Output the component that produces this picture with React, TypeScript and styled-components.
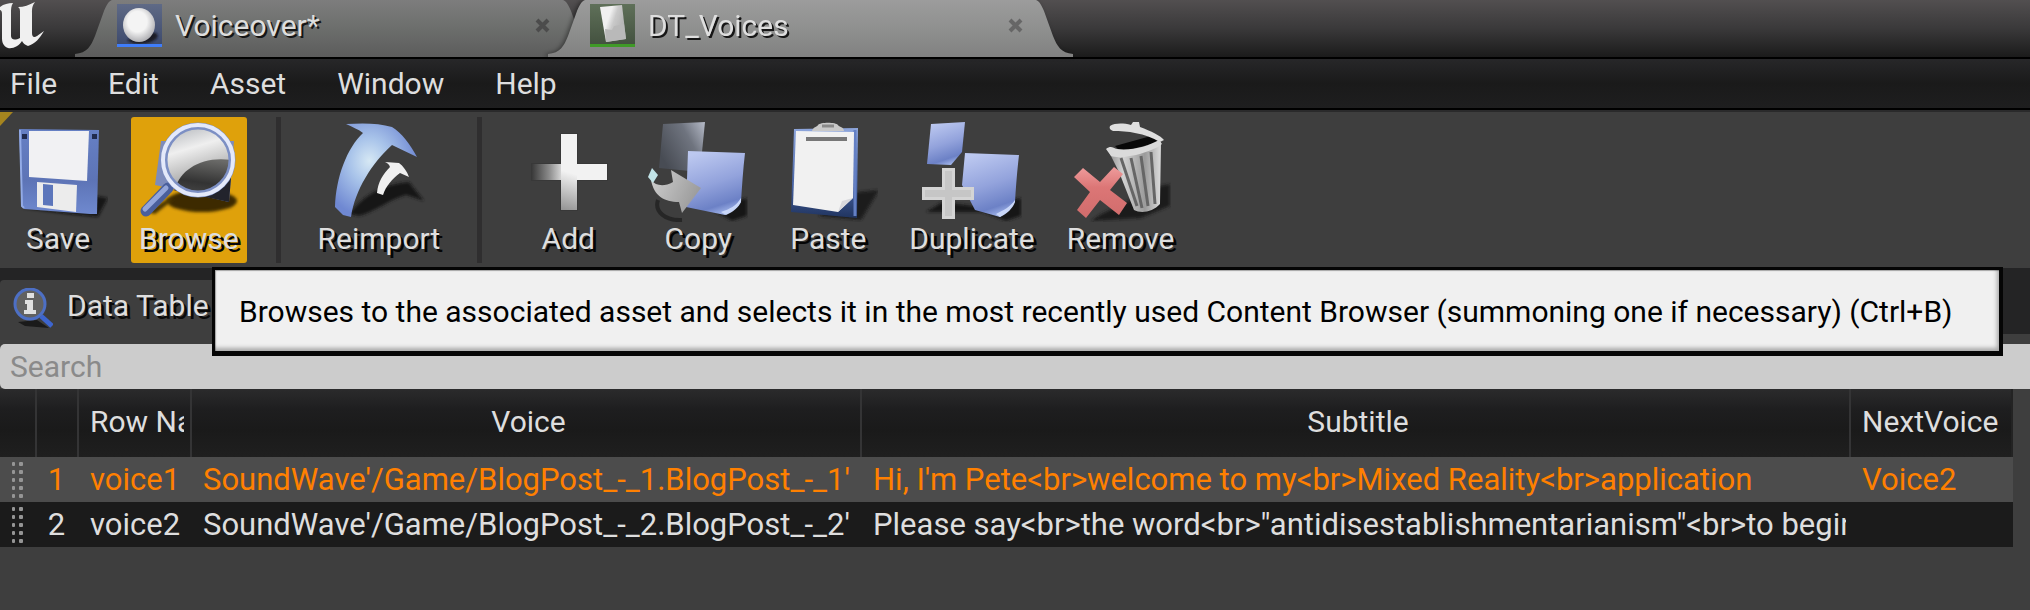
import React from 'react';
import styled, { createGlobalStyle } from 'styled-components';

const GlobalStyle = createGlobalStyle`
  *, *::before, *::after { box-sizing: border-box; }
  html, body, #root { min-height: 100vh; }
  body {
    margin: 0;
    background: #3e3e3e;
    color: #dedede;
    font: 30px/36px Roboto, 'Liberation Sans', sans-serif;
  }
  button, input { font: inherit; color: inherit; border: 0; padding: 0; margin: 0; background: none; }
  button { cursor: pointer; }
`;

const Window = styled.div`
  display: flex;
  flex-direction: column;
  min-height: 100vh;
  overflow: hidden;
`;

/* ---------- title bar and asset tabs ---------- */

const TitleBar = styled.header`
  display: flex;
  height: 59px;
  border-bottom: 2px solid #000;
  background: linear-gradient(#524f50, #3a393a 50%, #1b1b1b);
`;

const LogoBox = styled.div`
  width: 75px;
  flex: none;
  svg { display: block; }
`;

const TabShell = styled.div<{ $active?: boolean }>`
  display: flex;
  width: 525px;
  height: 57px;
  min-width: 0;
  & + & { margin-left: -52px; }
  filter: ${p => (p.$active ? 'drop-shadow(-2px 0 2px rgba(0, 0, 0, 0.4))' : 'none')};
  z-index: ${p => (p.$active ? 1 : 0)};
`;

const TabEnd = styled.svg<{ $flip?: boolean }>`
  flex: none;
  width: 38px;
  height: 57px;
  transform: ${p => (p.$flip ? 'scaleX(-1)' : 'none')};
`;

const TabBody = styled.div<{ $active?: boolean }>`
  flex: 1;
  display: flex;
  align-items: center;
  min-width: 0;
  padding: 0 8px 6px 4px;
  background: ${p =>
    p.$active
      ? 'linear-gradient(#9c9c9c, #8f908f 50%, #818181)'
      : 'linear-gradient(#7d7d7d, #6c6e6c 50%, #5c5c5c)'};
`;

const TabButton = styled.button`
  flex: 1;
  display: flex;
  align-items: center;
  gap: 13px;
  min-width: 0;
  text-align: left;
  text-shadow: 2px 2px 0 #161616;
`;

const CloseButton = styled.button`
  flex: none;
  display: flex;
  padding: 4px;
`;

/* ---------- menu ---------- */

const MenuBar = styled.nav`
  display: flex;
  gap: 51px;
  padding: 7px 10px 6px;
  background: linear-gradient(#272729, #1a1a1a 50%, #1e1e1f);
  border-bottom: 2px solid #000;
`;

const MenuItem = styled.button`
  line-height: 36px;
`;

/* ---------- toolbar ---------- */

const Toolbar = styled.div`
  position: relative;
  display: flex;
  gap: 16px;
  padding: 5px 1px;
  border-top: 2px solid #2a2a2b;
  background: #3e3e3e;
`;

const CornerMark = styled.svg`
  position: absolute;
  left: 0;
  top: 0;
`;

const Tool = styled.button<{ $hot?: boolean }>`
  display: flex;
  flex-direction: column;
  align-items: center;
  min-width: 114px;
  height: 146px;
  padding: 5px 8px 0;
  border-radius: 3px;
  background: ${p => (p.$hot ? '#dfa10b' : 'none')};
  text-shadow: 3px 3px 0 #050505;
  line-height: 34px;
  svg { flex: none; margin: 0 -8px; }
`;

const Separator = styled.span`
  flex: none;
  width: 5px;
  margin: 0 13px;
  background: #2f2e2f;
`;

/* ---------- panel ---------- */

const PanelTabs = styled.div`
  position: relative;
  display: flex;
  padding-top: 12px;
  height: 76px;
  background: linear-gradient(#242425 66px, #3e3e3e 66px);
`;

const PanelTab = styled.button`
  display: flex;
  align-items: flex-start;
  gap: 14px;
  width: 330px;
  padding: 8px 13px 0;
  border-radius: 4px 4px 0 0;
  background: #3e3e3e;
  text-align: left;
  text-shadow: 3px 3px 0 #0a0a0a;
`;

const Tooltip = styled.div`
  position: absolute;
  z-index: 5;
  left: 212px;
  top: -1px;
  border: solid #050505;
  border-width: 3px 4px 5px 3px;
  padding: 24px 46px 21px 24px;
  background: #f0f0f0;
  box-shadow: inset -2px -3px 4px rgba(0, 0, 0, 0.3), inset 1px 1px 1px rgba(0, 0, 0, 0.3);
  color: #000;
  white-space: nowrap;
`;

const SearchInput = styled.input`
  display: block;
  width: 100%;
  height: 45px;
  padding: 0 10px;
  border-radius: 5px 0 0 5px;
  background: #cccccc;
  color: #222;
  outline: none;
  &::placeholder { color: #8a8a8a; opacity: 1; }
`;

const TableWrap = styled.div`
  padding-right: 17px;
`;

const DataTable = styled.table`
  width: 100%;
  table-layout: fixed;
  border-collapse: separate;
  border-spacing: 0;
`;

const Col = styled.col<{ $w?: number }>`
  width: ${p => (p.$w ? `${p.$w}px` : 'auto')};
`;

const HeadCell = styled.th<{ $left?: boolean }>`
  height: 68px;
  padding: 0 6px 2px 11px;
  font-weight: 400;
  text-align: ${p => (p.$left ? 'left' : 'center')};
  background: linear-gradient(#2b2b2c, #1e1e1f 30%, #1a1a1a 60%, #1f1f1f);
  border-right: 2px solid #343435;
  &:last-child { border-right-color: #232323; }
`;

const Row = styled.tr<{ $selected?: boolean }>`
  height: 45px;
  background: ${p => (p.$selected ? '#4c4c4c' : '#1b1b1b')};
  color: ${p => (p.$selected ? '#ff8000' : '#dedede')};
`;

const Cell = styled.td<{ $number?: boolean }>`
  height: 45px;
  padding: ${p => (p.$number ? '0 3px 0 0' : '0 5px 0 11px')};
  text-align: ${p => (p.$number ? 'center' : 'left')};
  font-size: 31px;
`;

const Clip = styled.div`
  overflow: hidden;
  white-space: nowrap;
`;

const GripCell = styled.td`
  padding: 0 0 0 11px;
  svg { display: block; }
`;

/* ---------- drawings ---------- */

const Logo = () => (
  <svg width="46" height="52" viewBox="0 0 46 52" aria-label="Unreal">
    <path
      fill="#f0f0f0"
      d="M0 7C4 4 8 3 13 3C11 6 11 9 11 13V36C11 39 14 41 20 38V13C20 10 20 8 18 7C24 7 29 5 35 2C32 6 32 9 32 13V33C32 37 34 38 37 36L44 31C40 38 35 44 28 46C25 45 23 43 22 41C19 46 13 49 8 48C3 46 2 42 2 38V14C2 11 1 10 0 10Z"
    />
  </svg>
);

const TabEdge = ({ active, flip }: { active?: boolean; flip?: boolean }) => {
  const id = `edge-${active ? 'on' : 'off'}-${flip ? 'r' : 'l'}`;
  const stops = active ? ['#9c9c9c', '#8f908f', '#818181'] : ['#7d7d7d', '#6c6e6c', '#5c5c5c'];
  return (
    <TabEnd viewBox="0 0 38 57" $flip={flip} aria-hidden>
      <linearGradient id={id} x1="0" y1="0" x2="0" y2="57" gradientUnits="userSpaceOnUse">
        <stop offset="0" stopColor={stops[0]} />
        <stop offset="0.5" stopColor={stops[1]} />
        <stop offset="1" stopColor={stops[2]} />
      </linearGradient>
      <path fill={`url(#${id})`} d="M0 57V54C12 53 16 46 20 36L29 11C32 4 34 1 37 0H38V57Z" />
    </TabEnd>
  );
};

const SoundThumb = () => (
  <svg width="45" height="43" viewBox="0 0 45 43" aria-hidden>
    <defs>
      <linearGradient id="st" x1="0" y1="0" x2="0" y2="1">
        <stop offset="0" stopColor="#5f6a86" />
        <stop offset="1" stopColor="#3d4a6d" />
      </linearGradient>
      <radialGradient id="sb" cx="0.45" cy="0.4" r="0.6">
        <stop offset="0.5" stopColor="#f4f4f4" />
        <stop offset="1" stopColor="#b0b0b4" />
      </radialGradient>
      <filter id="sf"><feGaussianBlur stdDeviation="1" /></filter>
    </defs>
    <rect width="45" height="41" fill="url(#st)" />
    <path d="M10 36C16 42 34 41 40 34C42 29 38 28 34 29Z" fill="#1d1f26" filter="url(#sf)" />
    <ellipse cx="22" cy="21" rx="16" ry="17" fill="url(#sb)" />
    <rect y="40" width="45" height="3" fill="#3f7dfa" />
  </svg>
);

const TableThumb = () => (
  <svg width="45" height="43" viewBox="0 0 45 43" aria-hidden>
    <defs>
      <linearGradient id="tt" x1="0" y1="0" x2="0" y2="1">
        <stop offset="0" stopColor="#5f7059" />
        <stop offset="1" stopColor="#43513f" />
      </linearGradient>
      <linearGradient id="tc" x1="0" y1="0" x2="1" y2="0.5">
        <stop offset="0.4" stopColor="#f0f0f0" />
        <stop offset="0.6" stopColor="#c9c9c9" />
        <stop offset="1" stopColor="#b0b0b0" />
      </linearGradient>
    </defs>
    <rect width="45" height="41" fill="url(#tt)" />
    <path d="M10 3L32 1L36 35L16 38Z" fill="url(#tc)" />
    <path d="M16 38L15 25L22 26L24 22L34 20L36 35Z" fill="#b9b9b9" />
    <rect y="40" width="45" height="3" fill="#3f9a27" />
  </svg>
);

const CloseMark = ({ color }: { color: string }) => (
  <svg width="15" height="15" viewBox="0 0 15 15" aria-hidden>
    <path d="M2 2L13 13M13 2L2 13" stroke={color} strokeWidth="4" />
  </svg>
);

const Art = ({ children }: { children: React.ReactNode }) => (
  <svg width="100" height="100" viewBox="0 0 100 100" aria-hidden>{children}</svg>
);

const Blur = ({ id }: { id: string }) => (
  <filter id={id} x="-20%" y="-20%" width="140%" height="140%">
    <feGaussianBlur stdDeviation="1.5" />
  </filter>
);

const BlueCard = ({ id }: { id: string }) => (
  <linearGradient id={id} x1="0.3" y1="0" x2="0.6" y2="1">
    <stop offset="0" stopColor="#bcc8f0" />
    <stop offset="0.5" stopColor="#93a3dc" />
    <stop offset="0.85" stopColor="#6c81c6" />
    <stop offset="1" stopColor="#a3b6ea" />
  </linearGradient>
);

const SaveArt = () => (
  <Art>
    <defs>
      <Blur id="sv-b" />
      <linearGradient id="sv-g" x1="0" y1="0" x2="0" y2="1">
        <stop offset="0" stopColor="#6680c4" />
        <stop offset="0.6" stopColor="#5d74b6" />
        <stop offset="1" stopColor="#6f89cf" />
      </linearGradient>
    </defs>
    <path d="M14 86L88 74L100 76L90 95L60 92Z" fill="#111" opacity="0.8" filter="url(#sv-b)" />
    <path d="M11 7L91 8L89 92L82 92L16 87L14 84Z" fill="url(#sv-g)" />
    <path d="M12 8L14 84L16 86" stroke="#93abe6" strokeWidth="2" fill="none" />
    <path d="M21 9H81L79 59L21 55Z" fill="#f1f1f3" />
    <path d="M29 60L69 63L68 90L29 85Z" fill="#ececec" />
    <path d="M35 62L45 63V84L35 83Z" fill="#5c76bb" />
    <rect x="14" y="12" width="5" height="5" fill="#202b4d" />
    <rect x="84" y="12" width="5" height="5" fill="#202b4d" />
  </Art>
);

const BrowseArt = () => (
  <Art>
    <defs>
      <Blur id="br-b" />
      <linearGradient id="br-g" x1="0.2" y1="0" x2="0.5" y2="1">
        <stop offset="0" stopColor="#b5b8bd" />
        <stop offset="0.35" stopColor="#efefef" />
        <stop offset="1" stopColor="#8a8a8a" />
      </linearGradient>
      <linearGradient id="br-d" x1="0.6" y1="0" x2="0.4" y2="1">
        <stop offset="0" stopColor="#6a6a68" />
        <stop offset="0.6" stopColor="#333" />
        <stop offset="1" stopColor="#4a4a4a" />
      </linearGradient>
      <clipPath id="br-c"><circle cx="59" cy="38" r="32" /></clipPath>
    </defs>
    <ellipse cx="63" cy="79" rx="35" ry="11" fill="#3d2c00" filter="url(#br-b)" />
    <path d="M8 90L30 76L34 78L16 92Z" fill="#4a3500" filter="url(#br-b)" />
    <path d="M22 19L95 19L90 80L16 63Z" fill="#7e8cbb" />
    <path d="M34 68L92 56L90 80Z" fill="#22232c" />
    <path d="M29 66L7 89" stroke="#4a5f9c" strokeWidth="11" strokeLinecap="round" />
    <path d="M27 66L6 87" stroke="#94a6da" strokeWidth="5" strokeLinecap="round" />
    <circle cx="59" cy="38" r="34" fill="url(#br-g)" />
    <path d="M36 66C42 48 62 34 92 38L92 60L70 76Z" fill="url(#br-d)" clipPath="url(#br-c)" />
    <circle cx="59" cy="38" r="34" fill="none" stroke="#7c8fc4" strokeWidth="7" />
    <circle cx="59" cy="38" r="35" fill="none" stroke="#e4e9fa" strokeWidth="4" />
  </Art>
);

const ReimportArt = () => (
  <Art>
    <defs>
      <Blur id="ri-b" />
      <radialGradient id="ri-g" cx="0.42" cy="0.4" r="0.6">
        <stop offset="0" stopColor="#d6e8f4" />
        <stop offset="0.4" stopColor="#a9c4ea" />
        <stop offset="1" stopColor="#6f88d2" />
      </radialGradient>
    </defs>
    <path d="M20 92C34 74 52 62 80 60L95 79L77 73C60 78 46 90 30 94Z" fill="#161616" filter="url(#ri-b)" />
    <path d="M17 2C34 1 50 1 63 5C73 11 81 22 88 35L63 23C43 41 26 68 22 95L14 93L6 85C7 55 18 26 34 11C29 7 23 5 17 2Z" fill="url(#ri-g)" />
    <path d="M56 40L70 41C74 44 78 49 80 55L71 51C63 57 57 64 54 73L48 71C49 60 54 52 61 45C60 42 58 41 56 40Z" fill="#f0f0f0" />
  </Art>
);

const AddArt = () => (
  <Art>
    <defs>
      <linearGradient id="ad-h" x1="14" y1="0" x2="48" y2="0" gradientUnits="userSpaceOnUse">
        <stop offset="0" stopColor="#3a3a3a" />
        <stop offset="0.5" stopColor="#8b8b8b" />
        <stop offset="1" stopColor="#f2f2f2" />
      </linearGradient>
      <linearGradient id="ad-v" x1="44" y1="92" x2="56" y2="52" gradientUnits="userSpaceOnUse">
        <stop offset="0" stopColor="#8a8a8a" />
        <stop offset="1" stopColor="#f2f2f2" />
      </linearGradient>
    </defs>
    <path d="M42 11H60V41H90V59H60V89H42V59H13V41H42Z" fill="#383838" />
    <rect x="14" y="42" width="75" height="16" fill="url(#ad-h)" />
    <rect x="43" y="12" width="16" height="76" fill="url(#ad-v)" />
  </Art>
);

const CopyArt = () => (
  <Art>
    <defs>
      <Blur id="cp-b" />
      <BlueCard id="cp-g" />
      <linearGradient id="cp-d" x1="0" y1="0.6" x2="1" y2="0">
        <stop offset="0" stopColor="#484c54" />
        <stop offset="0.6" stopColor="#6f747f" />
        <stop offset="1" stopColor="#b6bbc8" />
      </linearGradient>
      <linearGradient id="cp-a" x1="0" y1="0" x2="1" y2="0.4">
        <stop offset="0" stopColor="#d0d0d0" />
        <stop offset="1" stopColor="#9c9c9c" />
      </linearGradient>
    </defs>
    <path d="M60 86L99 76V94L84 99Z" fill="#151515" filter="url(#cp-b)" />
    <path d="M10 78C6 90 18 99 34 98" stroke="#262626" strokeWidth="4" fill="none" />
    <path d="M15 2L57 0L52 50L11 46Z" fill="url(#cp-d)" />
    <path d="M40 29L97 31C95 48 94 64 93 80L77 93L38 85Z" fill="url(#cp-g)" />
    <path d="M93 76C88 84 82 87 73 90L78 93C85 90 91 85 93 80Z" fill="#c8d6f8" />
    <path d="M3 58C8 64 16 65 25 60L23 48L53 66L34 91L31 80C16 80 6 74 3 58Z" fill="url(#cp-a)" />
    <path d="M4 46L10 53L5 61L0 55Z" fill="#c2e4e8" />
  </Art>
);

const PasteArt = () => (
  <Art>
    <defs>
      <Blur id="ps-b" />
      <linearGradient id="ps-g" x1="0" y1="0" x2="0" y2="1">
        <stop offset="0" stopColor="#8ea6dc" />
        <stop offset="0.6" stopColor="#4a66a8" />
        <stop offset="1" stopColor="#20345f" />
      </linearGradient>
    </defs>
    <path d="M40 94L80 70L101 68L83 98Z" fill="#1c1c1c" filter="url(#ps-b)" />
    <path d="M16 7L80 6L79 96L13 90Z" fill="url(#ps-g)" />
    <path d="M77 8L77 94" stroke="#6480c4" strokeWidth="3" />
    <path d="M18 9L76 10L75 76L60 90L15 83Z" fill="#f1f1f1" />
    <path d="M75 76L64 79L60 90Z" fill="#d8d8dc" />
    <path d="M34 9C35 5 39 5 40 3C42 0 58 0 60 3C61 5 66 5 66 9Z" fill="#c9c9c9" />
    <path d="M44 4H56" stroke="#8a8a8a" strokeWidth="3" />
    <rect x="28" y="15" width="41" height="4" fill="#777" />
  </Art>
);

const DuplicateArt = () => (
  <Art>
    <defs>
      <Blur id="dp-b" />
      <BlueCard id="dp-g" />
    </defs>
    <path d="M4 90L20 80L52 84L99 76V94L84 99L60 90Z" fill="#191919" filter="url(#dp-b)" />
    <path d="M9 2L43 0C42 10 41 20 40 30L29 43L5 42Z" fill="url(#dp-g)" />
    <path d="M43 31L97 33C95 50 94 64 93 80L78 95L53 88L40 63Z" fill="url(#dp-g)" />
    <path d="M93 78C88 85 82 88 74 92L78 95C85 92 91 86 93 80Z" fill="#c8d6f8" />
    <path d="M20 46H33V65H52V78H33V97H20V78H0V65H20Z" fill="#d4d4d4" />
    <path d="M23 49H30V68H49V75H30V94H23V75H3V68H23Z" fill="#c6c6c6" />
  </Art>
);

const RemoveArt = () => (
  <Art>
    <defs>
      <Blur id="rm-b" />
      <linearGradient id="rm-g" x1="0" y1="0" x2="1" y2="0">
        <stop offset="0" stopColor="#8a8a8a" />
        <stop offset="0.3" stopColor="#d2d2d2" />
        <stop offset="0.7" stopColor="#9b9b9b" />
        <stop offset="1" stopColor="#dcdcdc" />
      </linearGradient>
      <linearGradient id="rm-x" x1="0" y1="0" x2="0" y2="1">
        <stop offset="0" stopColor="#ee9c9c" />
        <stop offset="0.4" stopColor="#dc7676" />
        <stop offset="1" stopColor="#d06c6c" />
      </linearGradient>
    </defs>
    <path d="M30 92L88 64L99 62V84L70 96L20 99Z" fill="#141414" opacity="0.85" filter="url(#rm-b)" />
    <path d="M44 24L80 14L88 20L50 30Z" fill="#080808" />
    <path d="M36 26C44 34 68 32 90 20L89 82C82 90 70 92 63 88L48 50Z" fill="url(#rm-g)" />
    <path d="M50 36L66 84M60 36L71 86M70 34L77 84M80 30L84 82" stroke="#666" strokeWidth="3" fill="none" />
    <path d="M35 27C40 23 42 26 46 27C60 29 78 24 88 18L91 22C80 31 50 38 40 34Z" fill="#dadada" />
    <path d="M39 4C44 1 52 1 60 3L62 0L68 0L69 5C80 9 90 14 93 18L89 20C74 11 56 9 42 9C39 8 38 6 39 4Z" fill="#dedede" />
    <path d="M3 55L12 46L29 60L43 45L52 52L39 68L56 81L48 93L29 78L15 96L6 88L19 70Z" fill="url(#rm-x)" />
  </Art>
);

const InfoArt = () => (
  <svg width="40" height="40" viewBox="0 0 40 40" aria-hidden>
    <path d="M5 34L24 32L36 40L12 38Z" fill="#1a1a1a" />
    <path d="M28 28L39 38" stroke="#3d65cf" strokeWidth="5" />
    <circle cx="17" cy="16" r="15" fill="#616161" stroke="#4d6fc4" strokeWidth="3" />
    <path d="M14 5H21V10H14ZM12 12H20V22H23V26H11V22H14V16H12Z" fill="#e0e0e0" />
  </svg>
);

const Grip = () => (
  <svg width="14" height="39" viewBox="0 0 14 39" aria-hidden>
    {[0, 1, 2, 3, 4].map(i => (
      <g key={i} fill="#959595">
        <rect x="1" y={2 + i * 8} width="3" height="4" rx="1" />
        <rect x="8" y={2 + i * 8} width="4" height="4" rx="1" />
      </g>
    ))}
  </svg>
);

/* ---------- content ---------- */

type ToolSpec = { label: string; art: React.ReactNode; hot?: boolean };

const menus = ['File', 'Edit', 'Asset', 'Window', 'Help'];

const toolGroups: ToolSpec[][] = [
  [
    { label: 'Save', art: <SaveArt /> },
    { label: 'Browse', art: <BrowseArt />, hot: true },
  ],
  [{ label: 'Reimport', art: <ReimportArt /> }],
  [
    { label: 'Add', art: <AddArt /> },
    { label: 'Copy', art: <CopyArt /> },
    { label: 'Paste', art: <PasteArt /> },
    { label: 'Duplicate', art: <DuplicateArt /> },
    { label: 'Remove', art: <RemoveArt /> },
  ],
];

const rows = [
  {
    name: 'voice1',
    voice: "SoundWave'/Game/BlogPost_-_1.BlogPost_-_1'",
    subtitle: "Hi, I'm Pete<br>welcome to my<br>Mixed Reality<br>application",
    next: 'Voice2',
  },
  {
    name: 'voice2',
    voice: "SoundWave'/Game/BlogPost_-_2.BlogPost_-_2'",
    subtitle: 'Please say<br>the word<br>"antidisestablishmentarianism"<br>to begin',
    next: '',
  },
];

const AssetTab = ({ label, thumb, active }: { label: string; thumb: React.ReactNode; active?: boolean }) => (
  <TabShell $active={active}>
    <TabEdge active={active} />
    <TabBody $active={active}>
      <TabButton>{thumb}{label}</TabButton>
      <CloseButton aria-label={`Close ${label}`}>
        <CloseMark color={active ? '#666666' : '#4c4c4c'} />
      </CloseButton>
    </TabBody>
    <TabEdge active={active} flip />
  </TabShell>
);

export default function App() {
  return (
    <>
      <GlobalStyle />
      <Window>
        <TitleBar>
          <LogoBox><Logo /></LogoBox>
          <AssetTab label="Voiceover*" thumb={<SoundThumb />} />
          <AssetTab label="DT_Voices" thumb={<TableThumb />} active />
        </TitleBar>
        <MenuBar>
          {menus.map(m => <MenuItem key={m}>{m}</MenuItem>)}
        </MenuBar>
        <Toolbar>
          <CornerMark width="13" height="14" viewBox="0 0 13 14" aria-hidden>
            <path d="M0 0H13L0 14Z" fill="#a6851f" />
          </CornerMark>
          {toolGroups.map((group, g) => (
            <React.Fragment key={g}>
              {g > 0 && <Separator />}
              {group.map(t => (
                <Tool key={t.label} $hot={t.hot} aria-describedby={t.hot ? 'browse-tip' : undefined}>
                  {t.art}
                  {t.label}
                </Tool>
              ))}
            </React.Fragment>
          ))}
        </Toolbar>
        <PanelTabs>
          <PanelTab><InfoArt />Data Table</PanelTab>
          <Tooltip role="tooltip" id="browse-tip">
            Browses to the associated asset and selects it in the most recently used Content Browser (summoning one if
            necessary) (Ctrl+B)
          </Tooltip>
        </PanelTabs>
        <SearchInput type="text" placeholder="Search" aria-label="Search" />
        <TableWrap>
          <DataTable>
            <colgroup>
              <Col $w={37} />
              <Col $w={42} />
              <Col $w={113} />
              <Col $w={670} />
              <Col />
              <Col $w={162} />
            </colgroup>
            <thead>
              <tr>
                <HeadCell />
                <HeadCell />
                <HeadCell $left><Clip>Row Name</Clip></HeadCell>
                <HeadCell><Clip>Voice</Clip></HeadCell>
                <HeadCell><Clip>Subtitle</Clip></HeadCell>
                <HeadCell $left><Clip>NextVoice</Clip></HeadCell>
              </tr>
            </thead>
            <tbody>
              {rows.map((r, i) => (
                <Row key={r.name} $selected={i === 0}>
                  <GripCell><Grip /></GripCell>
                  <Cell $number>{i + 1}</Cell>
                  <Cell><Clip>{r.name}</Clip></Cell>
                  <Cell><Clip>{r.voice}</Clip></Cell>
                  <Cell><Clip>{r.subtitle}</Clip></Cell>
                  <Cell><Clip>{r.next}</Clip></Cell>
                </Row>
              ))}
            </tbody>
          </DataTable>
        </TableWrap>
      </Window>
    </>
  );
}
